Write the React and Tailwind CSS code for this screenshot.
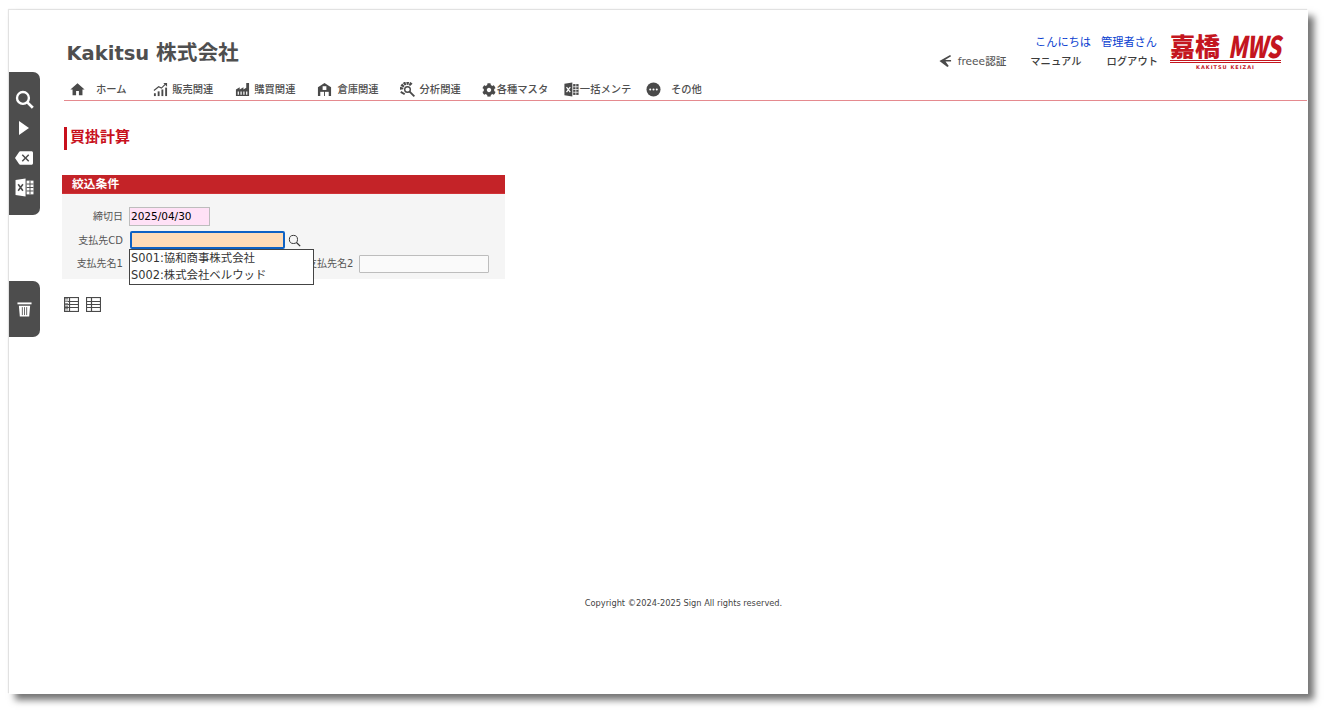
import { FaCog } from "react-icons/fa";
import { MdBackspace, MdHome } from "react-icons/md";

const JP = "font-['DejaVu_Sans','Noto_Sans_CJK_JP',sans-serif]";

const ChartIcon = () => (
  <svg viewBox="0 0 16 16" className="w-[15px] h-[15px]" fill="#4a4a4a">
    <rect x="1" y="12" width="2" height="3" />
    <rect x="5" y="10" width="2" height="5" />
    <rect x="9" y="8" width="2" height="7" />
    <rect x="13" y="6" width="2" height="9" />
    <path d="M1 9 L6 5 L9 6.5 L13 2.5" fill="none" stroke="#4a4a4a" strokeWidth="1.2" />
    <path d="M11 1 H15 V5 Z" />
  </svg>
);

const FactoryIcon = () => (
  <svg viewBox="0 0 16 16" className="w-[15px] h-[15px]">
    <path d="M1 15 V8 L5 5.5 V8 L9 5.5 V8 L12 6 V1 H15 V15 Z" fill="#4a4a4a" />
    <path d="M3.5 10 V13.5 M6.5 10 V13.5 M9.5 10 V13.5 M12.5 10 V13.5" stroke="#fff" strokeWidth="1.3" />
  </svg>
);

const WarehouseIcon = () => (
  <svg viewBox="0 0 16 16" className="w-[15px] h-[15px]">
    <path d="M1 5.5 L8 1 L15 5.5 V15 H1 Z" fill="#4a4a4a" />
    <rect x="6" y="4.5" width="4" height="4" fill="#fff" />
    <rect x="3.5" y="10.5" width="4" height="4.5" fill="#fff" />
    <rect x="8.5" y="10.5" width="4" height="4.5" fill="#fff" />
  </svg>
);

const AnalysisIcon = () => (
  <svg viewBox="0 0 16 16" className="w-[15px] h-[15px]" fill="none" stroke="#4a4a4a">
    <path d="M1.8 8 A6 6 0 0 1 12.5 3.5" strokeWidth="3.6" strokeDasharray="2.4 0.7" />
    <circle cx="8" cy="8" r="3" strokeWidth="1.5" />
    <path d="M10 10 L15.3 15.3" strokeWidth="2" />
    <path d="M0.8 10.5 L5 13" strokeWidth="2" />
  </svg>
);

const ExcelIcon = ({ color = "#4a4a4a", hole = "#fff", cls = "w-[15px] h-[15px]" }) => (
  <svg viewBox="0 0 18 18" className={cls}>
    <path d="M0.5 2 L10 0.5 V17.5 L0.5 16 Z" fill={color} />
    <path d="M3 6 L7.5 12 M7.5 6 L3 12" stroke={hole} strokeWidth="1.5" />
    <rect x="11" y="2.5" width="6.5" height="13" fill={color} />
    <path d="M14.2 2.5 V15.5 M11 5.7 H17.5 M11 9 H17.5 M11 12.3 H17.5" stroke={hole} strokeWidth="0.9" />
  </svg>
);

const DotsIcon = () => (
  <svg viewBox="0 0 16 16" className="w-[15px] h-[15px]">
    <circle cx="8" cy="8" r="7.5" fill="#4a4a4a" />
    <circle cx="4.5" cy="8" r="1.1" fill="#fff" />
    <circle cx="8" cy="8" r="1.1" fill="#fff" />
    <circle cx="11.5" cy="8" r="1.1" fill="#fff" />
  </svg>
);

const SearchIcon = ({ cls, color, sw = 1.5 }) => (
  <svg viewBox="0 0 16 16" className={cls} fill="none" stroke={color}>
    <circle cx="6.7" cy="6.7" r="5" strokeWidth={sw} />
    <path d="M10.4 10.4 L15 15" strokeWidth={sw + 0.3} />
  </svg>
);

const PlaneIcon = () => (
  <svg viewBox="0 0 14 14" className="w-[13px] h-[14px]" fill="#4a4a4a">
    <path d="M12 0.5 L13 2 L6.5 6 H13 V7.5 H7 L10.5 12.5 L9 13.5 L0.5 7 Z" />
  </svg>
);

const TableIcon = ({ dense }) => (
  <svg viewBox="0 0 15 15" className="w-[15px] h-[15px]" fill="none" stroke="#4a4a4a">
    <rect x="0.5" y="0.5" width="14" height="14" strokeWidth="1.2" />
    <path d="M0.5 4.5 H14.5 M0.5 7.5 H14.5 M0.5 10.5 H14.5 M5.5 0.5 V14.5" strokeWidth="1.2" />
    {dense && <path d="M2.5 1 V14" stroke="#8a8a8a" strokeWidth="3" strokeDasharray="1.5 1" />}
  </svg>
);

const TrashIcon = () => (
  <svg viewBox="0 0 16 17" className="w-[15px] h-[16px]" fill="#fff">
    <rect x="0.5" y="1.5" width="15" height="2" />
    <path d="M2 5 H14 L13 16.5 H3 Z" />
    <path d="M5.7 6.5 V15 M8 6.5 V15 M10.3 6.5 V15" stroke="#4d4d4d" strokeWidth="0.9" />
  </svg>
);

const NAV = [
  { icon: <MdHome className="w-[17px] h-[17px] text-[#4a4a4a] -ml-[2px]" />, label: "ホーム", gap: "ml-[10px]" },
  { icon: <ChartIcon />, label: "販売関連", gap: "ml-[4px]" },
  { icon: <FactoryIcon />, label: "購買関連", gap: "ml-[4px]" },
  { icon: <WarehouseIcon />, label: "倉庫関連", gap: "ml-[5px]" },
  { icon: <AnalysisIcon />, label: "分析関連", gap: "ml-[5px]" },
  { icon: <FaCog className="w-[14px] h-[14px] text-[#4a4a4a]" />, label: "各種マスタ", gap: "ml-[1px]" },
  { icon: <ExcelIcon />, label: "一括メンテ", gap: "ml-[1px]" },
  { icon: <DotsIcon />, label: "その他", gap: "ml-[10px]" },
];

const SideBar = ({ cls, children }) => (
  <div className={`absolute left-0 w-[31px] bg-[#4d4d4d] rounded-r-[7px] flex flex-col items-center ${cls}`}>
    {children}
  </div>
);

const App = () => {
  return (
    <div className={`w-[1331px] h-[717px] bg-white overflow-hidden pl-[9px] pt-[10px] ${JP}`}>
      <div className="relative w-[1299px] h-[684px] bg-white shadow-[6px_6px_7px_rgba(0,0,0,0.55),-1px_-1px_1px_rgba(0,0,0,0.1)]">
        <SideBar cls="top-[62px] h-[143px] pt-[18px] gap-[12px]">
          <SearchIcon cls="w-[19px] h-[19px]" color="#fff" sw={2} />
          <svg viewBox="0 0 10 14" className="w-[10px] h-[14px] -ml-[2px]" fill="#fff"><path d="M0 0 L10 7 L0 14 Z" /></svg>
          <MdBackspace className="w-[18px] h-[18px] text-white -ml-[1px] mt-[2px]" />
          <ExcelIcon color="#fff" hole="#4d4d4d" cls="w-[19px] h-[19px] -ml-[1px] -mt-[1px]" />
        </SideBar>
        <SideBar cls="top-[271px] h-[56px] pt-[20px]">
          <TrashIcon />
        </SideBar>

        <header className="flex justify-between pl-[57.5px] pr-[27px] pt-[24px] h-[66px]">
          <h1 className="text-[19.5px] leading-[38px] font-bold text-[#4f4f4f] whitespace-nowrap">
            Kakitsu <span className="text-[20.7px]">株式会社</span>
          </h1>
          <div className="flex gap-[12px]">
            <div className="flex flex-col items-end pt-[1px]">
              <div className="flex gap-[10px] text-[11.2px] leading-[16px] text-[#0b3fd0] mr-[1px]">
                <span>こんにちは</span>
                <span>管理者さん</span>
              </div>
              <div className="flex items-center text-[10.3px] leading-[16px] font-medium text-[#3c3c3c] mt-[2px]">
                <PlaneIcon />
                <span className="ml-[6px] font-medium text-[10.6px] text-[#555]">freee認証</span>
                <span className="ml-[24px]">マニュアル</span>
                <span className="ml-[25px]">ログアウト</span>
              </div>
            </div>
            <div className="w-[111px] text-[#c4161f] -mt-[1px]">
              <div className="flex items-center justify-between h-[25px] leading-[25px] font-['Noto_Sans_CJK_JP'] whitespace-nowrap">
                <span className="text-[25px] font-black shrink-0">嘉橋</span>
                <span className="w-[53px] text-[30px] font-black italic scale-x-[0.74] origin-left tracking-[-1px] shrink-0">MWS</span>
              </div>
              <div className="h-[3px] mt-[2px] border-t border-b border-[#c4161f]" />
              <div className="text-[5px] leading-[8px] font-bold text-center tracking-[1px]">KAKITSU KEIZAI</div>
            </div>
          </div>
        </header>

        <nav className="flex ml-[55px] mr-[1px] h-[25px] pt-[5px] border-b border-[#e58a8f]">
          {NAV.map((item) => (
            <div key={item.label} className="flex items-center w-[82.15px] pl-[7px] h-[17px] shrink-0">
              {item.icon}
              <span className={`${item.gap} text-[10.3px] font-medium text-[#4f4f4f] whitespace-nowrap`}>{item.label}</span>
            </div>
          ))}
        </nav>

        <h2 className="ml-[55px] mt-[26px] h-[23px] border-l-[3px] border-[#c8101c] pl-[3px] text-[15px] leading-[20px] font-bold text-[#c8101c]">
          買掛計算
        </h2>

        <section className="relative ml-[53px] mt-[25px] w-[443px] h-[104px] bg-[#f5f5f5] text-[10px] text-[#555]">
          <div className="h-[19px] bg-[#c42328] border-b border-[#d13338] pl-[10px] text-[11.8px] leading-[19px] font-bold text-white">絞込条件</div>
          <div className="flex flex-col gap-[6px] pt-[13px]">
            <div className="flex items-center h-[18px]">
              <label className="w-[61px] text-right">締切日</label>
              <div className="ml-[6px] w-[81px] h-[19px] bg-[#ffe1f6] border border-[#bdbdbd] pl-[1px] text-[10.5px] leading-[17px] text-black">2025/04/30</div>
            </div>
            <div className="flex items-center h-[18px]">
              <label className="w-[61px] text-right">支払先CD</label>
              <div className="ml-[7px] w-[155px] h-[18px] bg-[#ffdcb8] border-2 border-[#0f62c4] rounded-[2px]" />
              <SearchIcon cls="ml-[3px] w-[13px] h-[13px]" color="#333" sw={1.2} />
            </div>
            <div className="flex items-center h-[18px]">
              <label className="w-[61px] text-right -mt-[2px]">支払先名1</label>
              <label className="ml-[184px] w-[46px] text-right whitespace-nowrap -mt-[2px]">支払先名2</label>
              <div className="ml-[6px] w-[130px] h-[18px] bg-[#fafafa] border border-[#bdbdbd] rounded-[1px]" />
            </div>
          </div>
          <div className="absolute left-[67px] top-[74px] w-[185px] h-[36px] bg-white border border-[#444] text-[11.4px] leading-[17px] text-[#333] pl-[1px]">
            <div className="whitespace-nowrap">S001:協和商事株式会社</div>
            <div className="whitespace-nowrap">S002:株式会社ベルウッド</div>
          </div>
        </section>

        <div className="flex gap-[7px] ml-[55px] mt-[18px]">
          <TableIcon dense />
          <TableIcon />
        </div>

        <footer className="mt-[285px] text-center text-[8.25px] leading-[12px] text-[#444] pl-[50px]">
          Copyright ©2024-2025 Sign All rights reserved.
        </footer>
      </div>
    </div>
  );
};

export default App;
